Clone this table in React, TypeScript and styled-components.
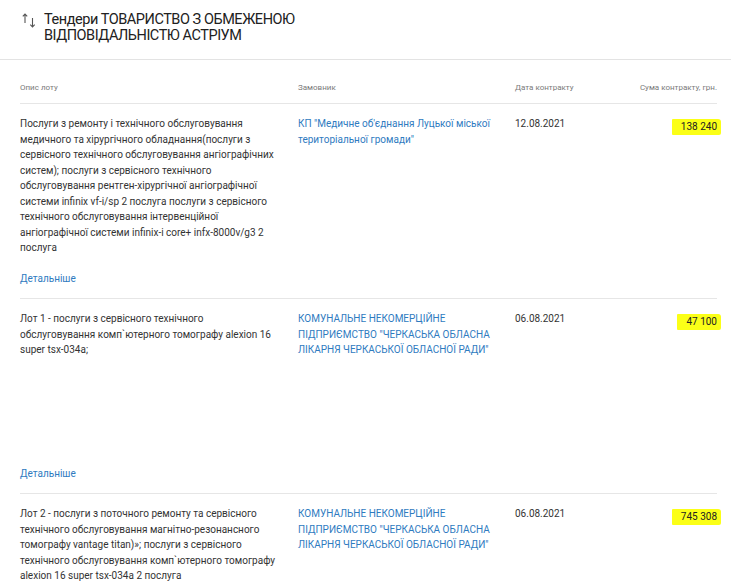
import styled, { createGlobalStyle } from "styled-components";

const GlobalStyle = createGlobalStyle`
    body {
        margin: 0;
        background: #fff;
        font-family: Roboto, "Liberation Sans", Arial, sans-serif;
        color: #333;
    }
`;

const Page = styled.div`
    width: 731px;
`;
const Header = styled.div`
    display: flex;
    align-items: flex-start;
    gap: 8px;
    padding: 12px 20px 15px 22px;
    border-bottom: 1px solid #e3e3e3;
`;
const SortIcon = styled.svg`
    flex-shrink: 0;
    margin-top: 1px;
`;
const Title = styled.h2`
    margin: 0;
    font-size: 14.5px;
    line-height: 16px;
    letter-spacing: -0.45px;
    font-weight: 400;
    color: #212121;
`;
const Table = styled.div`
    padding: 22px 14px 0 20px;
`;
const Grid = styled.div`
    display: grid;
    grid-template-columns: 260px 199px 1fr auto;
    column-gap: 18px;
    align-items: start;
`;
const HeadRow = styled(Grid)`
    padding-bottom: 9px;
    border-bottom: 1px solid #e6e6e6;
`;
const HeadCell = styled.div<{ right?: boolean }>`
    font-size: 8px;
    line-height: 12px;
    color: #7a7a7a;
    text-align: ${props => props.right ? "right" : "left"};
`;
const Row = styled.div`
    padding: 12px 0 11px;
    border-bottom: 1px solid #e6e6e6;
`;
const RowGrid = styled(Grid)`
    min-height: 141px;
`;
const Cell = styled.div`
    font-size: 10px;
    line-height: 15.5px;
    color: #333;
`;
const Customer = styled(Cell)`
    color: #2f7bbf;
`;
const AmountCell = styled.div`
    display: flex;
    justify-content: flex-end;
    padding-top: 3px;
`;
const Amount = styled.span`
    font-size: 10px;
    line-height: 12px;
    color: #222;
    background: #fbff17;
    padding: 2px 4px 2px 9px;
    margin-right: -4px;
    border-radius: 1px 3px 2px 1px;
`;
const More = styled.a`
    display: block;
    margin-top: 14px;
    font-size: 10px;
    line-height: 16px;
    color: #2f7bbf;
    text-decoration: none;
`;

const lots = [
    {
        desc: "Послуги з ремонту і технічного обслуговування медичного та хірургічного обладнання(послуги з сервісного технічного обслуговування ангіографічних систем); послуги з сервісного технічного обслуговування рентген-хірургічної ангіографічної системи infinix vf-i/sp 2 послуга послуги з сервісного технічного обслуговування інтервенційної ангіографічної системи infinix-i core+ infx-8000v/g3 2 послуга",
        customer: "КП \"Медичне об'єднання Луцької міської територіальної громади\"",
        date: "12.08.2021",
        sum: "138 240",
    },
    {
        desc: "Лот 1 - послуги з сервісного технічного обслуговування комп`ютерного томографу alexion 16 super tsx-034a;",
        customer: "КОМУНАЛЬНЕ НЕКОМЕРЦІЙНЕ ПІДПРИЄМСТВО \"ЧЕРКАСЬКА ОБЛАСНА ЛІКАРНЯ ЧЕРКАСЬКОЇ ОБЛАСНОЇ РАДИ\"",
        date: "06.08.2021",
        sum: "47 100",
    },
    {
        desc: "Лот 2 - послуги з поточного ремонту та сервісного технічного обслуговування магнітно-резонансного томографу vantage titan)»; послуги з сервісного технічного обслуговування комп`ютерного томографу alexion 16 super tsx-034a 2 послуга",
        customer: "КОМУНАЛЬНЕ НЕКОМЕРЦІЙНЕ ПІДПРИЄМСТВО \"ЧЕРКАСЬКА ОБЛАСНА ЛІКАРНЯ ЧЕРКАСЬКОЇ ОБЛАСНОЇ РАДИ\"",
        date: "06.08.2021",
        sum: "745 308",
    },
];

const App = () => {
    return (
        <Page>
            <GlobalStyle />
            <Header>
                <SortIcon width="14" height="15" viewBox="0 0 14 15" fill="none" stroke="#555" strokeWidth="1.1">
                    <path d="M3 10V1M0.8 3.3L3 1l2.2 2.3" />
                    <path d="M10.5 5v9M8.3 11.7l2.2 2.3 2.2-2.3" />
                </SortIcon>
                <Title>Тендери ТОВАРИСТВО З ОБМЕЖЕНОЮ<br />ВІДПОВІДАЛЬНІСТЮ АСТРІУМ</Title>
            </Header>
            <Table>
                <HeadRow>
                    <HeadCell>Опис лоту</HeadCell>
                    <HeadCell>Замовник</HeadCell>
                    <HeadCell>Дата контракту</HeadCell>
                    <HeadCell right>Сума контракту, грн.</HeadCell>
                </HeadRow>
                {lots.map((lot, index) => (
                    <Row key={index}>
                        <RowGrid>
                            <Cell>{lot.desc}</Cell>
                            <Customer>{lot.customer}</Customer>
                            <Cell>{lot.date}</Cell>
                            <AmountCell>
                                <Amount>{lot.sum}</Amount>
                            </AmountCell>
                        </RowGrid>
                        <More href="#">Детальніше</More>
                    </Row>
                ))}
            </Table>
        </Page>
    );
};
export default App;
